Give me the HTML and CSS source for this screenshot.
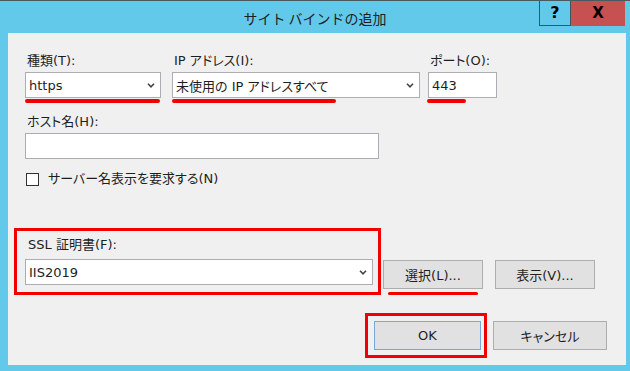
FILE: index.html
```html
<!DOCTYPE html>
<html lang="ja">
<head>
<meta charset="utf-8">
<title>サイト バインドの追加</title>
<link rel="stylesheet" href="styles.css">
</head>
<body>
<div class="window">
  <div class="titlebar">
    <div class="tb-spacer"></div>
    <div class="title">サイト バインドの追加</div>
    <div class="tb-buttons">
      <div class="tb-help">?</div>
      <div class="tb-close">X</div>
    </div>
  </div>
  <div class="content">
    <div class="row1">
      <div class="field f-type">
        <div class="label">種類(T):</div>
        <div class="select"><span>https</span><svg class="chev" width="8" height="5" viewBox="0 0 8 5"><polyline points="1,0.8 4,3.8 7,0.8"/></svg></div>
        <div class="mark mark-type"></div>
      </div>
      <div class="field f-ip">
        <div class="label">IP アドレス(I):</div>
        <div class="select"><span>未使用の IP アドレスすべて</span><svg class="chev" width="8" height="5" viewBox="0 0 8 5"><polyline points="1,0.8 4,3.8 7,0.8"/></svg></div>
        <div class="mark mark-ip"></div>
      </div>
      <div class="field f-port">
        <div class="label">ポート(O):</div>
        <div class="textbox"><span>443</span></div>
        <div class="mark mark-port"></div>
      </div>
    </div>

    <div class="host">
      <div class="label">ホスト名(H):</div>
      <div class="textbox host-box"></div>
    </div>

    <div class="check-row">
      <div class="checkbox"></div>
      <div class="check-label">サーバー名表示を要求する(N)</div>
    </div>

    <div class="cert-row">
      <div class="cert-box">
        <div class="label ssl-label">SSL 証明書(F):</div>
        <div class="select cert-select"><span>IIS2019</span><svg class="chev" width="8" height="5" viewBox="0 0 8 5"><polyline points="1,0.8 4,3.8 7,0.8"/></svg></div>
      </div>
      <div class="btn-col">
        <div class="btn btn-sel">選択(L)...</div>
        <div class="mark mark-sel"></div>
      </div>
      <div class="btn btn-view">表示(V)...</div>
    </div>

    <div class="footer">
      <div class="ok-box">
        <div class="btn btn-ok">OK</div>
      </div>
      <div class="btn btn-cancel">キャンセル</div>
    </div>
  </div>
</div>
</body>
</html>
```

FILE: styles.css
```css
* { box-sizing: border-box; }
html, body { margin: 0; padding: 0; }
body {
  width: 630px;
  height: 371px;
  overflow: hidden;
  font-family: "DejaVu Sans", "Noto Sans CJK JP", sans-serif;
  font-size: 13px;
  color: #1e1e1e;
  font-feature-settings: "palt";
}
.window {
  width: 630px;
  height: 371px;
  background: #63c9ea;
  border-top: 1px solid #4a5a60;
  display: flex;
  flex-direction: column;
}
.titlebar {
  height: 32px;
  display: grid;
  grid-template-columns: 91px 1fr 91px;
  flex: none;
}
.title {
  font-family: "Noto Sans CJK JP", sans-serif;
  font-feature-settings: normal;
  font-size: 14px;
  line-height: 32px;
  text-align: center;
  color: #1e1e1e;
  padding-top: 1px;
}
.tb-buttons {
  display: flex;
  align-items: flex-start;
}
.tb-help {
  width: 32px;
  height: 25px;
  border: 1px solid #3b5561;
  border-top: none;
  background: #63c9ea;
  font-family: "DejaVu Sans", sans-serif;
  font-weight: bold;
  font-size: 16px;
  line-height: 23px;
  text-align: center;
  color: #000;
}
.tb-close {
  width: 54px;
  height: 25px;
  background: #c75050;
  font-family: "DejaVu Sans", sans-serif;
  font-weight: bold;
  font-size: 15px;
  line-height: 24px;
  text-align: center;
  color: #000;
}
.content {
  flex: 1;
  margin: 0 4px 6px 8px;
  background: #f0f0f0;
  padding: 19px 0 0 17px;
  display: flex;
  flex-direction: column;
}
.label {
  height: 18px;
  line-height: 18px;
  padding-left: 2px;
  white-space: nowrap;
}
.row1 {
  display: flex;
  align-items: flex-start;
}
.f-type { width: 136px; }
.f-ip { width: 248px; margin-left: 11px; }
.f-port { width: 69px; margin-left: 8px; }
.select, .textbox {
  height: 26px;
  margin-top: 2px;
  background: #fff;
  border: 1px solid #abadb3;
  display: flex;
  align-items: center;
  justify-content: space-between;
  padding: 0 5px 0 3px;
  white-space: nowrap;
}
.chev {
  flex: none;
}
.chev polyline {
  fill: none;
  stroke: #444;
  stroke-width: 1.6;
}
.mark {
  height: 4px;
  background: #f20000;
  border-radius: 2px;
  margin-top: 1px;
}
.mark-type { width: 135px; }
.mark-ip { width: 164px; }
.mark-port { width: 39px; margin-left: -1px; }

.host { margin-top: 10px; }
.host-box { width: 354px; }

.check-row {
  margin-top: 11px;
  height: 18px;
  display: flex;
  align-items: center;
}
.checkbox {
  width: 13px;
  height: 13px;
  margin-left: 1px;
  background: #fff;
  border: 1px solid #333;
}
.check-label {
  margin-left: 9px;
  line-height: 18px;
  white-space: nowrap;
}

.cert-row {
  margin-top: 40px;
  display: flex;
  align-items: flex-start;
}
.cert-box {
  margin-left: -11px;
  width: 367px;
  border: 3px solid #f20000;
  padding: 5px 5px 7px 8px;
}
.ssl-label { padding-left: 3px; }
.cert-select {
  width: 348px;
  margin-top: 5px;
}
.btn {
  height: 29px;
  background: #e1e1e1;
  border: 1px solid #adadad;
  display: flex;
  align-items: center;
  justify-content: center;
  white-space: nowrap;
}
.btn-col {
  margin-left: 2px;
  margin-top: 32px;
}
.btn-sel { width: 100px; }
.mark-sel {
  width: 90px;
  height: 3px;
  margin-left: 5px;
  margin-top: 3px;
}
.btn-view {
  width: 100px;
  margin-left: 12px;
  margin-top: 32px;
}
.footer {
  margin-top: 18px;
  display: flex;
  justify-content: flex-end;
  align-items: flex-start;
  padding-right: 19px;
}
.ok-box {
  border: 3px solid #f20000;
  padding: 5px 3px 5px 6px;
}
.btn-ok {
  width: 107px;
  border-color: #7aa5d8;
}
.btn-cancel {
  width: 114px;
  margin-left: 6px;
  margin-top: 8px;
}
```
